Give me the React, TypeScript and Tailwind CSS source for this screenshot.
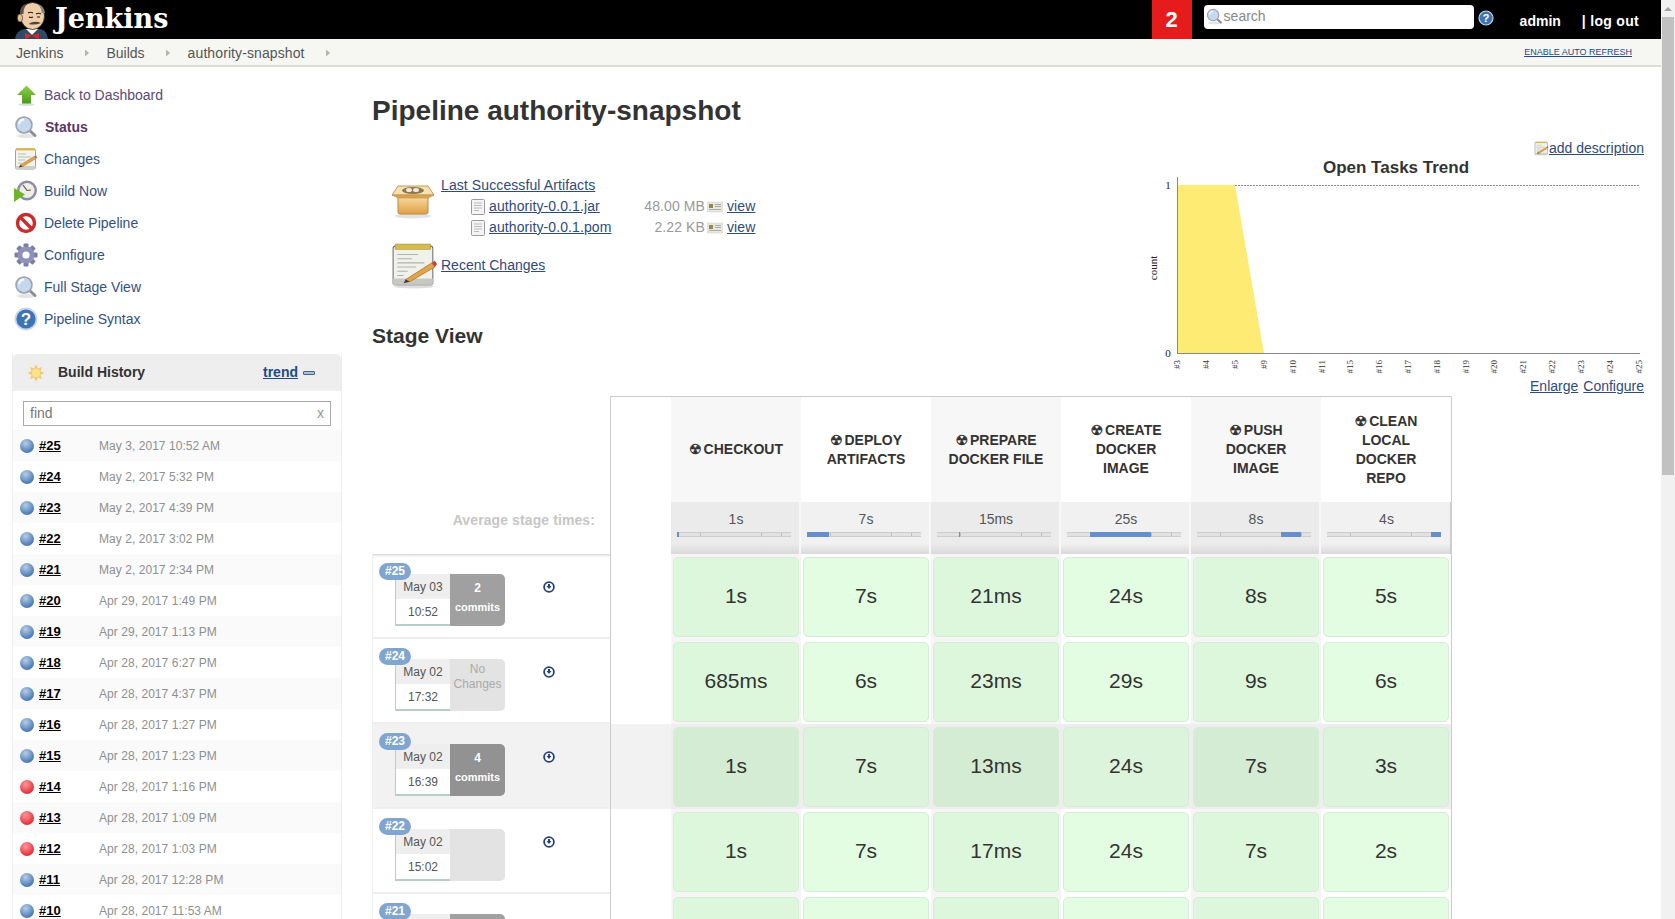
import React from "react";

const Magnifier = ({ size = 24 }: { size?: number }) => (
  <svg width={size} height={size} viewBox="0 0 24 24" className="shrink-0">
    <ellipse cx="12" cy="21" rx="9" ry="2" fill="#e4e4e4" />
    <path d="M14.5 14.5 L21 20.5" stroke="#8a8f96" strokeWidth="3" strokeLinecap="round" />
    <circle cx="10" cy="10" r="8" fill="#c4d8ee" stroke="#9aa3ad" strokeWidth="1.6" />
    <path d="M5 9 A5.5 5.5 0 0 1 10 4.5" stroke="#ffffff" strokeWidth="2" fill="none" />
  </svg>
);

const Notepad = ({ size = 24 }: { size?: number }) => (
  <svg width={size} height={size} viewBox="0 0 24 24" className="shrink-0">
    <rect x="1.5" y="2" width="20" height="20" rx="1.5" fill="#f3f3ee" stroke="#8b8b85" strokeWidth="0.8" />
    <rect x="1.5" y="19" width="20" height="3" fill="#cfcfca" />
    <rect x="2" y="1.2" width="19" height="2.2" fill="#d9b64c" />
    <path d="M4 7h8M4 10h13M4 13h7M4 16h4" stroke="#b5b5b0" strokeWidth="0.9" />
    <path d="M6 18 L20 9.5 L22 11.5 L9 19.5 Z" fill="#e0a44a" stroke="#a0702c" strokeWidth="0.4" />
    <path d="M20 9.5 L22 8.5 L23 10.5 L22 11.5 Z" fill="#d9534f" />
    <path d="M6 18 L5 20.5 L9 19.5 Z" fill="#4a3a28" />
  </svg>
);

const UpArrow = () => (
  <svg width="24" height="24" viewBox="0 0 24 24" className="shrink-0">
    <defs>
      <linearGradient id="arrowGreen" x1="0" y1="0" x2="0" y2="1">
        <stop offset="0" stopColor="#8ed04a" />
        <stop offset="1" stopColor="#4b9a1c" />
      </linearGradient>
    </defs>
    <ellipse cx="12.5" cy="21.5" rx="8" ry="1.5" fill="#dddddd" />
    <path d="M12.5 2.5 L22 12 H17 V20.5 H8 V12 H3 Z" fill="url(#arrowGreen)" />
  </svg>
);

const BuildNow = () => (
  <svg width="24" height="24" viewBox="0 0 24 24" className="shrink-0">
    <circle cx="13" cy="11.5" r="10" fill="#8d8da6" />
    <circle cx="13" cy="11.5" r="7.5" fill="#efeee6" />
    <path d="M13 11.5 L9 6 M13 11.5 L17 11" stroke="#555555" strokeWidth="1.2" />
    <path d="M0 9 L11 15.5 L0 23 Z" fill="#6fb52c" />
  </svg>
);

const NoSign = () => (
  <svg width="24" height="24" viewBox="0 0 24 24" className="shrink-0">
    <circle cx="12" cy="12" r="8.5" fill="#ffffff" stroke="#cc2b2b" strokeWidth="3.4" />
    <path d="M6 6 L18 18" stroke="#cc2b2b" strokeWidth="3.4" />
  </svg>
);

const Gear = () => (
  <svg width="24" height="24" viewBox="0 0 24 24" className="shrink-0">
    {[0, 45, 90, 135].map((a) => (
      <rect key={a} x="9.5" y="0.5" width="5" height="23" rx="1" fill="#7a7fa8" transform={`rotate(${a} 12 12)`} />
    ))}
    <circle cx="12" cy="12" r="8.5" fill="#8e92ba" />
    <circle cx="12" cy="12" r="3.6" fill="#ffffff" />
  </svg>
);

const Help = ({ size = 24 }: { size?: number }) => (
  <svg width={size} height={size} viewBox="0 0 24 24" className="shrink-0">
    <circle cx="12" cy="12" r="10.5" fill="#3f74b4" stroke="#c5d6ea" strokeWidth="1.8" />
    <text x="12" y="18" textAnchor="middle" fontSize="17" fontWeight="700" fontFamily="Liberation Sans" fill="#ffffff">?</text>
  </svg>
);

const Ball = ({ red }: { red?: boolean }) => (
  <span
    className={`block w-[14px] h-[14px] rounded-full shrink-0 ${
      red
        ? "bg-[radial-gradient(circle_at_40%_30%,#ff9a9a,#e8404a_60%,#b8262e)]"
        : "bg-[radial-gradient(circle_at_40%_30%,#b7cde6,#5b88bd_60%,#2f5b92)]"
    }`}
  />
);

const Sun = () => (
  <svg width="18" height="18" viewBox="0 0 18 18" className="shrink-0">
    {[0, 45, 90, 135, 180, 225, 270, 315].map((a) => (
      <path key={a} d="M9 0.5 L10.6 4 H7.4 Z" fill="#f5c66a" transform={`rotate(${a} 9 9)`} />
    ))}
    <circle cx="9" cy="9" r="4.8" fill="#fbe38a" stroke="#f2bc5c" strokeWidth="0.7" />
  </svg>
);

const FileIcon = () => (
  <svg width="15" height="16" viewBox="0 0 15 16" className="shrink-0">
    <rect x="0.5" y="0.5" width="13" height="15" rx="1" fill="#f4f4f4" stroke="#9a9a9a" />
    <path d="M3 4h8M3 6.5h8M3 9h8M3 11.5h5" stroke="#bcbcbc" />
  </svg>
);

const Fingerprint = () => (
  <svg width="16" height="12" viewBox="0 0 16 12" className="shrink-0">
    <rect x="0" y="1" width="16" height="10" fill="#e8e8e0" stroke="#cfcfc8" strokeWidth="0.5" />
    <rect x="2" y="3" width="4" height="4" fill="#8c8a4e" />
    <path d="M8 3.5h6M8 5.5h6M2 8.5h12" stroke="#aaaaaa" />
  </svg>
);

const BoxIcon = () => (
  <svg width="48" height="36" viewBox="0 0 48 36" className="shrink-0">
    <defs>
      <linearGradient id="boxFill" x1="0" y1="0" x2="0" y2="1">
        <stop offset="0" stopColor="#f8d9a0" />
        <stop offset="1" stopColor="#e0a045" />
      </linearGradient>
    </defs>
    <ellipse cx="24" cy="33" rx="18" ry="2.5" fill="#e2e2e2" />
    <path d="M9 14 H39 V29 Q39 31 37 31 H11 Q9 31 9 29 Z" fill="url(#boxFill)" stroke="#b98a42" />
    <path d="M9 3 H39 L45 12 H3 Z" fill="#f7e1b4" stroke="#c39a55" />
    <ellipse cx="24" cy="7.5" rx="11" ry="3.5" fill="#8e7650" />
    <ellipse cx="20" cy="7" rx="3" ry="2" fill="#ece8df" />
    <ellipse cx="27" cy="7" rx="3" ry="2" fill="#ece8df" />
    <path d="M3 12 H45 L39 15 H9 Z" fill="#dca552" stroke="#b98a42" strokeWidth="0.6" />
  </svg>
);

const BigNotepad = () => (
  <svg width="46" height="46" viewBox="0 0 44 44" className="shrink-0">
    <ellipse cx="22" cy="41.5" rx="19" ry="2" fill="#dedede" />
    <rect x="2" y="3" width="38" height="37" rx="2" fill="#f1f1ec" stroke="#6e6e6a" />
    <rect x="2" y="34" width="38" height="6" fill="#c8c8c3" />
    <rect x="4" y="1" width="34" height="5" fill="#d7b94d" stroke="#a48b2d" strokeWidth="0.5" />
    <path d="M6 11h20M6 15h14M6 19h26M6 23h18M6 27h10M6 31h6" stroke="#b2b2ad" />
    <path d="M14 35 L39 19 L42 23 L18 37 Z" fill="#e0a44a" stroke="#9a6c2a" strokeWidth="0.6" />
    <path d="M39 19 L42 17 L44 20 L42 23 Z" fill="#cf3f3a" />
    <path d="M14 35 L12 38.5 L18 37 Z" fill="#46382a" />
  </svg>
);

const JenkinsHead = () => (
  <svg width="36" height="39" viewBox="0 0 36 39" className="shrink-0">
    <path d="M1 39 Q2 30 11 29 H26 Q33 30 34 39 Z" fill="#2f4a66" />
    <path d="M12 29 L18 35 L24 29 Z" fill="#ffffff" />
    <ellipse cx="18.5" cy="16" rx="12" ry="13.5" fill="#f0cfa8" stroke="#2a2a2a" strokeWidth="0.8" />
    <path d="M6 14 Q5 6 13 3.5 Q9 9 9.5 14 Z" fill="#5c5550" />
    <path d="M31 13 Q30 6 24 4 Q28 9 27.5 13 Z" fill="#8d8680" />
    <ellipse cx="6" cy="18" rx="2.6" ry="4" fill="#e9bd96" stroke="#2a2a2a" strokeWidth="0.6" />
    <path d="M14 13 Q16.5 11.5 19 13 M22 14 Q24.5 12.5 27 14" stroke="#222222" strokeWidth="1.2" fill="none" />
    <path d="M15 17 Q17 18 19 17 M23 17 h3" stroke="#222222" strokeWidth="1.1" fill="none" />
    <path d="M14.5 24 Q20 20 27 23 Q21 25.5 14.5 24 Z" fill="#4b4640" />
    <path d="M11 33 L18 36 L11 39 Z M25 33 L18 36 L25 39 Z" fill="#d52b2b" />
    <circle cx="18" cy="36" r="1.5" fill="#a81d1d" />
  </svg>
);

const DownloadIcon = () => (
  <svg width="12" height="12" viewBox="0 0 12 12" className="shrink-0">
    <circle cx="6" cy="6" r="4.9" fill="#ffffff" stroke="#25437a" strokeWidth="1.8" />
    <path d="M3.5 5 H8.5 L6 8 Z" fill="#25437a" />
    <rect x="5" y="3" width="2" height="2.5" fill="#25437a" />
  </svg>
);

const Crumb = () => (
  <svg width="6" height="8" viewBox="0 0 6 8" className="shrink-0">
    <path d="M1 0.5 L5 4 L1 7.5 Z" fill="#b4b4ae" />
  </svg>
);

const tasks: { label: string; icon: React.ReactNode; cls: string }[] = [
  { label: "Back to Dashboard", icon: <UpArrow />, cls: "text-[#5c4a72]" },
  { label: "Status", icon: <Magnifier />, cls: "ml-px text-[#5c3566] font-bold" },
  { label: "Changes", icon: <Notepad />, cls: "text-[#35507f]" },
  { label: "Build Now", icon: <BuildNow />, cls: "text-[#35507f]" },
  { label: "Delete Pipeline", icon: <NoSign />, cls: "text-[#35507f]" },
  { label: "Configure", icon: <Gear />, cls: "text-[#35507f]" },
  { label: "Full Stage View", icon: <Magnifier />, cls: "text-[#35507f]" },
  { label: "Pipeline Syntax", icon: <Help />, cls: "text-[#35507f]" },
];

const history = [
  ["#25", "May 3, 2017 10:52 AM"],
  ["#24", "May 2, 2017 5:32 PM"],
  ["#23", "May 2, 2017 4:39 PM"],
  ["#22", "May 2, 2017 3:02 PM"],
  ["#21", "May 2, 2017 2:34 PM"],
  ["#20", "Apr 29, 2017 1:49 PM"],
  ["#19", "Apr 29, 2017 1:13 PM"],
  ["#18", "Apr 28, 2017 6:27 PM"],
  ["#17", "Apr 28, 2017 4:37 PM"],
  ["#16", "Apr 28, 2017 1:27 PM"],
  ["#15", "Apr 28, 2017 1:23 PM"],
  ["#14", "Apr 28, 2017 1:16 PM"],
  ["#13", "Apr 28, 2017 1:09 PM"],
  ["#12", "Apr 28, 2017 1:03 PM"],
  ["#11", "Apr 28, 2017 12:28 PM"],
  ["#10", "Apr 28, 2017 11:53 AM"],
];

const failed = ["#14", "#13", "#12"];

const stages = [
  { name: ["CHECKOUT"], avg: "1s", from: 0, to: 1.5 },
  { name: ["DEPLOY", "ARTIFACTS"], avg: "7s", from: 0, to: 22 },
  { name: ["PREPARE", "DOCKER FILE"], avg: "15ms", from: 22, to: 23 },
  { name: ["CREATE", "DOCKER", "IMAGE"], avg: "25s", from: 23, to: 84 },
  { name: ["PUSH", "DOCKER", "IMAGE"], avg: "8s", from: 84, to: 104 },
  { name: ["CLEAN", "LOCAL", "DOCKER", "REPO"], avg: "4s", from: 104, to: 114 },
];

const runs = [
  { id: "#25", day: "May 03", time: "10:52", count: "2", note: "commits", cells: ["1s", "7s", "21ms", "24s", "8s", "5s"], first: true },
  { id: "#24", day: "May 02", time: "17:32", count: "", note: "none", cells: ["685ms", "6s", "23ms", "29s", "9s", "6s"] },
  { id: "#23", day: "May 02", time: "16:39", count: "4", note: "commits", cells: ["1s", "7s", "13ms", "24s", "7s", "3s"], hover: true },
  { id: "#22", day: "May 02", time: "15:02", count: "", note: "", cells: ["1s", "7s", "17ms", "24s", "7s", "2s"] },
  { id: "#21", day: "May 02", time: "14:34", count: "1", note: "commit", cells: ["1s", "7s", "16ms", "24s", "7s", "4s"] },
];

const ticks = [23, 84, 104];

const chartLabels = [
  ["#3", 43], ["#4", 72], ["#5", 101], ["#9", 130], ["#10", 159], ["#11", 188], ["#15", 216], ["#16", 245], ["#17", 274],
  ["#18", 303], ["#19", 332], ["#20", 360], ["#21", 389], ["#22", 418], ["#23", 447], ["#24", 476], ["#25", 505],
] as const;

function TrendChart() {
  return (
    <svg width="510" height="216" viewBox="0 0 510 216" className="block shrink-0">
      <text x="262" y="15" textAnchor="middle" fontSize="17" fontWeight="700" fontFamily="Liberation Sans" fill="#333333">
        Open Tasks Trend
      </text>
      <polygon points="43,27 101,27 130,195.5 43,195.5" fill="#fdeb73" />
      <line x1="101" y1="27.5" x2="506" y2="27.5" stroke="#888888" strokeWidth="1" strokeDasharray="2 1" />
      <line x1="43.5" y1="19" x2="43.5" y2="196" stroke="#888888" />
      <line x1="43" y1="195.5" x2="506" y2="195.5" stroke="#888888" />
      <text x="34" y="31" textAnchor="middle" fontSize="11" fontFamily="Liberation Serif" fill="#222222">1</text>
      <text x="34" y="199" textAnchor="middle" fontSize="11" fontFamily="Liberation Serif" fill="#222222">0</text>
      <text transform="translate(23 110) rotate(-90)" textAnchor="middle" fontSize="11" fontFamily="Liberation Serif" fill="#222222">
        count
      </text>
      {chartLabels.map(([label, x]) => (
        <text key={label} transform={`translate(${x + 3} 202) rotate(-90)`} textAnchor="end" fontSize="9" fontFamily="Liberation Serif" fill="#333333">
          {label}
        </text>
      ))}
    </svg>
  );
}

function Sidebar() {
  return (
    <div className="w-[372px] shrink-0 pt-[12px]">
      {tasks.map((t) => (
        <div key={t.label} className="flex items-center h-[32px] pl-[14px] gap-[6px] text-[14px]">
          {t.icon}
          <span className={t.cls}>{t.label}</span>
        </div>
      ))}
      <div className="mt-[19px] ml-[12px] w-[330px] border-x border-[#eeeeee]">
        <div className="flex items-center h-[37px] bg-[#eeeeee] rounded-t-[5px] pl-[14px] pr-[26px] text-[14px]">
          <Sun />
          <span className="ml-[13px] font-bold text-[#333333]">Build History</span>
          <span className="ml-auto font-bold underline text-[#204a87]">trend</span>
          <span className="ml-[5px] w-[12px] h-[4px] bg-[#a9c1dd] border border-[#3f648f] rounded-[1px]" />
        </div>
        <div className="px-[10px] pt-[10px] pb-[4px]">
          <div className="flex items-center justify-between h-[25px] border border-[#aaaaaa] px-[6px] text-[14px] text-[#777777]">
            <span>find</span>
            <span className="text-[#999999]">x</span>
          </div>
        </div>
        {history.map(([id, date], i) => (
          <div key={id} className={`flex items-center h-[31px] pl-[7px] text-[12px] tracking-[0.05px] ${i % 2 === 0 ? "bg-[#fafafa]" : "bg-white"}`}>
            <Ball red={failed.includes(id)} />
            <span className="ml-[5px] w-[60px] text-[13px] font-bold underline text-black">{id}</span>
            <span className="text-[#8f8f8f]">{date}</span>
          </div>
        ))}
      </div>
    </div>
  );
}

function StageHead() {
  return (
    <>
      <div className="grid grid-cols-[238px_61px_repeat(5,130px)_131px] h-[106px]">
        <div />
        <div className="border-l border-t border-[#cccccc]" />
        {stages.map((s, i) => (
          <div
            key={s.avg + i}
            className={`flex flex-col items-center justify-center border-t border-[#cccccc] text-[14px] leading-[19px] font-bold text-[#333333] ${
              i % 2 === 0 ? "bg-[#f7f7f7]" : "bg-white"
            } ${i === 5 ? "border-r" : ""}`}
          >
            {s.name.map((line, j) => (
              <div key={line}>
                {j === 0 && <span className="font-['DejaVu_Sans'] text-[14px] mr-[2px] [-webkit-text-stroke:0.4px_#333333]">☢</span>}
                {line}
              </div>
            ))}
          </div>
        ))}
      </div>
      <div className="grid grid-cols-[238px_61px_repeat(5,130px)_131px] h-[52px]">
        <div className="flex items-center justify-end pr-[15px] pb-[16px] text-[14px] font-bold tracking-[0.1px] text-[#c6c6c6]">
          Average stage times:
        </div>
        <div className="border-l border-[#cccccc]" />
        {stages.map((s, i) => (
          <div
            key={s.avg}
            className={`flex flex-col items-center pt-[9px] border-r-2 border-[#f7f7f7] text-[14px] leading-[16px] text-[#555555] bg-linear-to-b via-80% to-[#d9d9d9] ${
              i % 2 === 0 ? "from-[#ebebeb] via-[#ebebeb]" : "from-[#f1f1f1] via-[#f1f1f1]"
            } ${i === 5 ? "border-r-[#cccccc] border-r" : ""}`}
          >
            <span className="ml-[2px]">{s.avg}</span>
            <div className="relative self-start mt-[5px] ml-[6px] w-[114px] h-[5px] bg-[#e2e2e2] border-y border-[#cdcdcd]">
              {ticks.map((t) => (
                <span key={t} className="absolute top-0 bottom-0 w-px bg-[#bdbdbd]" style={{ left: t }} />
              ))}
              <span
                className="absolute top-[-1px] bottom-[-1px] bg-[#6690cc]"
                style={{ left: s.from, width: s.to - s.from }}
              />
            </div>
          </div>
        ))}
      </div>
    </>
  );
}

function RunRow({ run }: { run: (typeof runs)[number] }) {
  const rowBg = run.hover ? "bg-[#f2f2f2]" : "bg-white";
  const commitBg = run.note === "commits" || run.note === "commit" ? (run.hover ? "bg-[#929292] text-white" : "bg-[#a0a0a0] text-white") : "bg-[#e3e3e3] text-[#aaaaaa]";
  return (
    <div className="grid grid-cols-[238px_61px_repeat(5,130px)_131px] h-[85px]">
      <div className={`relative border-l border-b-2 border-[#eeeeee] ${rowBg} ${run.first ? "shadow-[inset_0_3px_3px_-2px_#cccccc]" : ""}`}>
        <span className="absolute left-[6px] top-[9px] z-10 w-[32px] h-[17px] rounded-full bg-[#80a6cf] text-center text-[12px] leading-[17px] font-bold text-white">
          {run.id}
        </span>
        <div className="flex ml-[22px] mt-[20px] w-[110px] h-[52px] text-[12px]">
          <div className="w-[55px] border-l border-b-2 border-[#b7cdc7] bg-white text-center text-[#555555]">
            <div className="h-[25px] leading-[26px] bg-[#eeeeee]">{run.day}</div>
            <div className="leading-[26px]">{run.time}</div>
          </div>
          <div className={`w-[55px] rounded-r-[5px] text-center ${commitBg}`}>
            {run.note === "none" ? (
              <div className="pt-[3px] leading-[15px]">
                No
                <br />
                Changes
              </div>
            ) : run.note ? (
              <div className="pt-[5px] leading-[19px] font-bold">
                {run.count}
                <br />
                <span className="text-[11px]">{run.note}</span>
              </div>
            ) : null}
          </div>
        </div>
        <span className="absolute left-[170px] top-[27px]">
          <DownloadIcon />
        </span>
      </div>
      <div className={`border-l border-[#cccccc] ${rowBg}`} />
      {run.cells.map((c, i) => {
        const even = i % 2 === 0;
        const colBg = run.hover ? "bg-[#eeeeee]" : even ? "bg-[#f5f5f5]" : "bg-white";
        const cellBg = run.hover ? (even ? "bg-[#d3ecd3]" : "bg-[#dcf3dc]") : even ? "bg-[#ddf7dd]" : "bg-[#e2fde2]";
        return (
          <div key={i} className={`pt-[3px] px-[2px] ${colBg} ${i === 5 ? "border-r border-[#cccccc]" : ""}`}>
            <div className={`flex items-center justify-center h-[80px] rounded-[5px] border border-[#d6ecd6] text-[21px] pb-[2px] text-[#333333] ${cellBg}`}>
              {c}
            </div>
          </div>
        );
      })}
    </div>
  );
}

export default function App() {
  return (
    <div className="flex h-[919px] overflow-hidden bg-white font-['Liberation_Sans',Arial,sans-serif] text-[#333333]">
      <div className="w-[1661px] shrink-0">
        <header className="flex items-center h-[39px] bg-black text-white">
          <div className="flex items-end h-full pl-[14px]">
            <JenkinsHead />
          </div>
          <span className="ml-[5px] -mt-[2px] font-['DejaVu_Serif',serif] font-bold text-[27px] leading-none">Jenkins</span>
          <div className="flex items-center justify-center ml-auto w-[40px] h-full bg-[#e61c1c] text-[22px] font-bold">2</div>
          <div className="flex items-center ml-[12px] w-[270px] h-[24px] mb-[6px] pl-[2px] gap-[1px] rounded-[4px] bg-white text-[14px] text-[#888888]">
            <Magnifier size={17} />
            search
          </div>
          <div className="ml-[4px] mb-[4px]">
            <Help size={16} />
          </div>
          <span className="ml-[26px] mt-[3px] text-[14px] font-bold">admin</span>
          <span className="ml-[21px] mr-[22px] mt-[3px] text-[14px] font-bold tracking-[0.3px]">| log out</span>
        </header>
        <nav className="flex items-center h-[28px] pt-[2px] bg-[#f6f7f2] border-b-2 border-[#dcdcd6] pl-[16px] pr-[29px] text-[14px] text-[#555555]">
          <span>Jenkins</span>
          <span className="ml-[21px] mr-[16px]"><Crumb /></span>
          <span>Builds</span>
          <span className="ml-[20px] mr-[17px]"><Crumb /></span>
          <span className="tracking-[0.1px]">authority-snapshot</span>
          <span className="ml-[20px]"><Crumb /></span>
          <span className="ml-auto text-[9px] underline text-[#204a87]">ENABLE AUTO REFRESH</span>
        </nav>
        <div className="flex">
          <Sidebar />
          <main className="flex-1">
            <div className="flex justify-between h-[329px]">
              <div>
                <h1 className="mt-[28px] text-[28px] leading-[32px] font-bold text-[#333333]">Pipeline authority-snapshot</h1>
                <div className="flex mt-[56px] ml-[17px]">
                  <BoxIcon />
                  <div className="ml-[4px] text-[14px] leading-[21px] -mt-[8px] tracking-[0.1px] text-[#2f4a7c]">
                    <div className="underline">Last Successful Artifacts</div>
                    {[
                      ["authority-0.0.1.jar", "48.00 MB"],
                      ["authority-0.0.1.pom", "2.22 KB"],
                    ].map(([name, size]) => (
                      <div key={name} className="flex items-center pl-[30px]">
                        <FileIcon />
                        <span className="ml-[3px] w-[122px] whitespace-nowrap underline">{name}</span>
                        <span className="w-[94px] text-right text-[#999999]">{size}</span>
                        <span className="ml-[2px]"><Fingerprint /></span>
                        <span className="ml-[4px] underline">view</span>
                      </div>
                    ))}
                  </div>
                </div>
                <div className="flex items-center mt-[5px] ml-[19px]">
                  <BigNotepad />
                  <span className="ml-[4px] mb-[2px] text-[14px] underline text-[#2f4a7c]">Recent Changes</span>
                </div>
                <h2 className="mt-[35px] text-[21px] leading-[24px] font-bold text-[#333333]">Stage View</h2>
              </div>
              <div className="flex flex-col items-end pr-[17px] pt-[71px] text-[14px] text-[#2f4a7c]">
                <div className="flex items-center h-[20px]">
                  <Notepad size={15} />
                  <span className="underline">add description</span>
                </div>
                <TrendChart />
                <div className="mt-[2px] flex gap-[5px]">
                  <span className="underline">Enlarge</span>
                  <span className="underline">Configure</span>
                </div>
              </div>
            </div>
            <StageHead />
            {runs.map((r) => (
              <RunRow key={r.id} run={r} />
            ))}
          </main>
        </div>
      </div>
      <div className="flex flex-col w-[14px] bg-[#f1f1f1]">
        <div className="flex items-center justify-center h-[17px]">
          <span className="w-0 h-0 border-x-[4px] border-x-transparent border-b-[4px] border-b-[#a3a3a3]" />
        </div>
        <div className="h-[458px] mx-px bg-[#c1c1c1]" />
      </div>
    </div>
  );
}
